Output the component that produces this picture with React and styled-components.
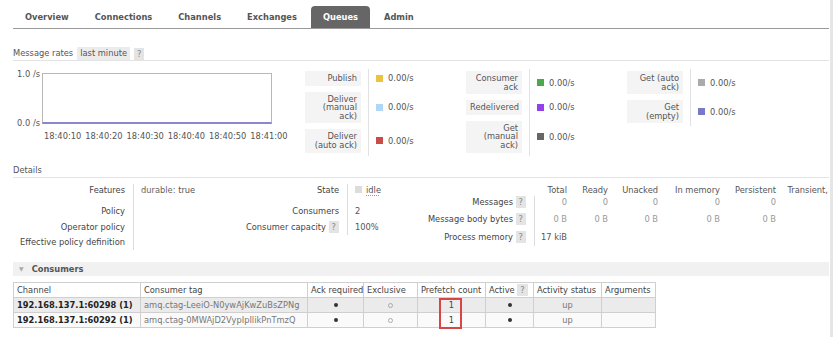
import React from 'react';
import styled, { createGlobalStyle } from 'styled-components';

const GlobalStyle = createGlobalStyle`
  html, body {
    margin: 0;
    padding: 0;
    background: #fff;
  }
  body {
    font-family: "DejaVu Sans", Verdana, sans-serif;
    font-size: 8.3px;
    color: #444;
  }
`;

const tabs = ['Overview', 'Connections', 'Channels', 'Exchanges', 'Queues', 'Admin'];
const times = ['18:40:10', '18:40:20', '18:40:30', '18:40:40', '18:40:50', '18:41:00'];

const legend = [
  [
    { label: 'Publish', color: '#edc240' },
    { label: 'Deliver (manual ack)', color: '#afd8f8' },
    { label: 'Deliver (auto ack)', color: '#cb4b4b' },
  ],
  [
    { label: 'Consumer ack', color: '#4da74d' },
    { label: 'Redelivered', color: '#9440ed' },
    { label: 'Get (manual ack)', color: '#666666' },
  ],
  [
    { label: 'Get (auto ack)', color: '#aaaaaa' },
    { label: 'Get (empty)', color: '#7c79c4' },
  ],
];

const countCols = [
  { name: 'Total', w: 32 },
  { name: 'Ready', w: 40 },
  { name: 'Unacked', w: 49 },
  { name: 'In memory', w: 61 },
  { name: 'Persistent', w: 55 },
  { name: 'Transient,', w: 51 },
];

const consumers = [
  { channel: '192.168.137.1:60298 (1)', tag: 'amq.ctag-LeeiO-N0ywAjKwZuBsZPNg' },
  { channel: '192.168.137.1:60292 (1)', tag: 'amq.ctag-0MWAjD2VypIpIlikPnTmzQ' },
];

const consumerCols = [
  ['Channel', 127],
  ['Consumer tag', 167],
  ['Ack required', 56],
  ['Exclusive', 54],
  ['Prefetch count', 68],
  ['Active', 48],
  ['Activity status', 68],
  ['Arguments', 54],
];

const Help = () => <HelpChip>?</HelpChip>;

const App = () => {
  return (
    <>
      <GlobalStyle />
      <Page>
        <Nav>
          {tabs.map(t => (
            <Tab key={t} $active={t === 'Queues'}>
              {t}
            </Tab>
          ))}
        </Nav>

        <SectionTitle $top={18}>
          Message rates
          <Chip>last minute</Chip>
          <HelpChip>?</HelpChip>
        </SectionTitle>

        <RatesRow>
          <ChartBlock>
            <Plot>
              <YAxis>
                <span>1.0 /s</span>
                <span>0.0 /s</span>
              </YAxis>
              <PlotBox />
            </Plot>
            <TimeAxis>
              {times.map(t => (
                <span key={t}>{t}</span>
              ))}
            </TimeAxis>
          </ChartBlock>

          {legend.map((group, gi) => (
            <LegendGroup key={gi}>
              <LegendSep style={{ gridRow: `1 / span ${group.length}` }} />
              {group.map((item, i) => (
                <React.Fragment key={item.label}>
                  <LegendLabel style={{ gridRow: i + 1 }}>{item.label}</LegendLabel>
                  <LegendValue style={{ gridRow: i + 1 }}>
                    <Swatch $color={item.color} />
                    0.00/s
                  </LegendValue>
                </React.Fragment>
              ))}
            </LegendGroup>
          ))}
        </RatesRow>

        <SectionTitle $top={8}>Details</SectionTitle>

        <DetailsRow>
          <KV>
            <tbody>
              <Tr $h={20} $top>
                <Th $w={112} $pt={1}>Features</Th>
                <Td $w={92} $pt={1}>
                  <Muted>durable:</Muted> true
                </Td>
              </Tr>
              <Tr $h={15}>
                <Th $w={112}>Policy</Th>
                <Td $w={92} />
              </Tr>
              <Tr $h={16}>
                <Th $w={112}>Operator policy</Th>
                <Td $w={92} />
              </Tr>
              <Tr $h={15}>
                <Th $w={112}>Effective policy definition</Th>
                <Td $w={92} />
              </Tr>
            </tbody>
          </KV>

          <KV>
            <tbody>
              <Tr $h={20} $top>
                <Th $w={106} $pt={1}>State</Th>
                <Td $w={65} $pt={1}>
                  <StateBox>
                    <Swatch $color="#dcdcdc" />
                    <Abbr>idle</Abbr>
                  </StateBox>
                </Td>
              </Tr>
              <Tr $h={15}>
                <Th $w={106}>Consumers</Th>
                <Td $w={65}>2</Td>
              </Tr>
              <Tr $h={16}>
                <Th $w={106}>
                  Consumer capacity <Help />
                </Th>
                <Td $w={65}>100%</Td>
              </Tr>
            </tbody>
          </KV>

          <KV>
            <tbody>
              <Tr $h={12}>
                <Th $w={106} />
                {countCols.map((c, i) => (
                  <NumHead key={c.name} $w={c.w}>
                    {c.name}
                  </NumHead>
                ))}
              </Tr>
              <Tr $h={13}>
                <Th $w={106}>
                  Messages <Help />
                </Th>
                {countCols.map((c, i) => (
                  <Num key={c.name} $w={c.w} $first={i === 0}>
                    {i < 5 ? '0' : ''}
                  </Num>
                ))}
              </Tr>
              <Tr $h={20}>
                <Th $w={106}>
                  Message body bytes <Help />
                </Th>
                {countCols.map((c, i) => (
                  <Num key={c.name} $w={c.w} $first={i === 0}>
                    {i < 5 ? '0 B' : ''}
                  </Num>
                ))}
              </Tr>
              <Tr $h={17}>
                <Th $w={106}>
                  Process memory <Help />
                </Th>
                {countCols.map((c, i) => (
                  <Num key={c.name} $w={c.w} $first={i === 0} $dark={i === 0}>
                    {i === 0 ? '17 kiB' : ''}
                  </Num>
                ))}
              </Tr>
            </tbody>
          </KV>
        </DetailsRow>

        <CollapseBar>
          <Caret>▼</Caret>
          Consumers
        </CollapseBar>

        <ConsumerTable>
          <colgroup>
            {consumerCols.map(([name, w]) => (
              <col key={name} style={{ width: w }} />
            ))}
          </colgroup>
          <thead>
            <tr>
              {consumerCols.map(([name]) => (
                <CHead key={name}>
                  {name}
                  {name === 'Active' && (
                    <>
                      {' '}
                      <Help />
                    </>
                  )}
                </CHead>
              ))}
            </tr>
          </thead>
          <tbody>
            {consumers.map((c, i) => (
              <CRow key={c.channel} $alt={i === 0}>
                <CCell $bold>{c.channel}</CCell>
                <CCell $muted>{c.tag}</CCell>
                <CCell $center>
                  <Dot />
                </CCell>
                <CCell $center>
                  <Ring />
                </CCell>
                <CCell $center $anchor={i === 0}>
                  1{i === 0 && <Highlight />}
                </CCell>
                <CCell $center>
                  <Dot />
                </CCell>
                <CCell $center $muted>
                  up
                </CCell>
                <CCell />
              </CRow>
            ))}
          </tbody>
        </ConsumerTable>
      </Page>
    </>
  );
};

export default App;

const Page = styled.div`
  width: 816px;
  height: 337px;
  padding: 0 1px 0 13px;
  border-right: 3px solid #e6e6e6;
  overflow: hidden;
`;

const Nav = styled.nav`
  display: flex;
  gap: 2px;
  height: 22px;
  padding-top: 6px;
  border-bottom: 1px solid #9a9a9a;
`;

const Tab = styled.div`
  padding: 0 12px;
  line-height: 22px;
  font-weight: bold;
  color: ${p => (p.$active ? '#fff' : '#555')};
  background: ${p => (p.$active ? '#666' : 'transparent')};
  border-radius: 4px 4px 0 0;
`;

const SectionTitle = styled.div`
  display: flex;
  align-items: center;
  gap: 4px;
  margin-top: ${p => p.$top}px;
  height: 13px;
  line-height: 13px;
  color: #555;
  border-bottom: 1px solid #e3e3e3;
`;

const Chip = styled.span`
  padding: 0 3px;
  background: #ececec;
  color: #555;
`;

const HelpChip = styled.span`
  display: inline-block;
  padding: 0 3px;
  line-height: 12px;
  background: #e4e4e4;
  color: #888;
`;

const RatesRow = styled.div`
  display: flex;
  margin-top: 8px;
`;

const ChartBlock = styled.div`
  width: 292px;
  flex-shrink: 0;
  padding-top: 4px;
`;

const Plot = styled.div`
  display: flex;
`;

const YAxis = styled.div`
  width: 27px;
  margin: -4px 2px -4px 0;
  display: flex;
  flex-direction: column;
  justify-content: space-between;
  align-items: flex-end;
  line-height: 10px;
  color: #555;
`;

const PlotBox = styled.div`
  width: 228px;
  height: 48px;
  border: 1px solid #b8b8b8;
  border-bottom: 2px solid #8b87cf;
`;

const TimeAxis = styled.div`
  display: flex;
  gap: 4px;
  margin-top: 7px;
  padding-left: 31px;
  line-height: 10px;
  color: #555;
  white-space: nowrap;
`;

const LegendGroup = styled.div`
  width: 161px;
  flex-shrink: 0;
  display: grid;
  grid-template-columns: 56px 1px auto;
  column-gap: 7px;
  row-gap: 6px;
  align-items: center;
  align-content: start;
  padding: 2px 0 3px;
`;

const LegendSep = styled.div`
  grid-column: 2;
  align-self: stretch;
  margin: -2px 0 -3px;
  background: #e2e2e2;
`;

const LegendLabel = styled.div`
  grid-column: 1;
  width: 48px;
  padding: 3px 4px;
  line-height: 8.6px;
  text-align: right;
  background: #f4f4f4;
  color: #555;
`;

const LegendValue = styled.div`
  grid-column: 3;
  display: flex;
  align-items: center;
  gap: 5px;
  color: #555;
`;

const Swatch = styled.span`
  display: inline-block;
  width: 7px;
  height: 7px;
  background: ${p => p.$color};
`;

const DetailsRow = styled.div`
  display: flex;
  align-items: flex-start;
  margin-top: 6px;
`;

const KV = styled.table`
  flex-shrink: 0;
  border-collapse: collapse;
  border-spacing: 0;
  font-size: inherit;
  color: #444;
`;

const Tr = styled.tr`
  height: ${p => p.$h}px;
  vertical-align: ${p => (p.$top ? 'top' : 'middle')};
`;

const Th = styled.th`
  width: ${p => p.$w}px;
  padding: ${p => p.$pt || 0}px 8px 0 0;
  font-weight: normal;
  text-align: right;
  white-space: nowrap;
  line-height: 10px;
`;

const Td = styled.td`
  width: ${p => p.$w}px;
  padding: ${p => p.$pt || 0}px 0 0 7px;
  border-left: 1px solid #dcdcdc;
  white-space: nowrap;
  line-height: 10px;
  color: #555;
`;

const Muted = styled.span`
  color: #666;
`;

const StateBox = styled.span`
  display: inline-flex;
  align-items: center;
  gap: 4px;
`;

const Abbr = styled.span`
  text-decoration: underline dotted #999;
  text-underline-offset: 2px;
`;

const NumHead = styled.th`
  width: ${p => p.$w}px;
  padding: 0;
  border-left: 1px solid transparent;
  font-weight: normal;
  text-align: right;
  white-space: nowrap;
  color: #555;
`;

const Num = styled.td`
  width: ${p => p.$w}px;
  padding: 0;
  border-left: 1px solid ${p => (p.$first ? '#dcdcdc' : 'transparent')};
  text-align: right;
  white-space: nowrap;
  color: ${p => (p.$dark ? '#555' : '#999')};
`;

const CollapseBar = styled.div`
  display: flex;
  align-items: center;
  margin-top: 12px;
  height: 14px;
  padding-left: 6px;
  background: #f1f1f1;
  font-weight: bold;
  color: #555;
`;

const Caret = styled.span`
  font-size: 6px;
  color: #aaa;
  margin-right: 8px;
`;

const ConsumerTable = styled.table`
  margin-top: 6px;
  width: 642px;
  table-layout: fixed;
  border-collapse: collapse;
  font-size: inherit;
  color: #444;
`;

const CHead = styled.th`
  height: 14px;
  padding: 0 3px;
  border: 1px solid #cfcfcf;
  font-weight: normal;
  text-align: left;
  white-space: nowrap;
  background: #fff;
`;

const CRow = styled.tr`
  background: ${p => (p.$alt ? '#ebebeb' : '#fafafa')};
`;

const CCell = styled.td`
  position: ${p => (p.$anchor ? 'relative' : 'static')};
  height: 14px;
  padding: 0 3px;
  border: 1px solid #cfcfcf;
  white-space: nowrap;
  overflow: ${p => (p.$anchor ? 'visible' : 'hidden')};
  text-align: ${p => (p.$center ? 'center' : 'left')};
  font-weight: ${p => (p.$bold ? 'bold' : 'normal')};
  color: ${p => (p.$bold ? '#222' : p.$muted ? '#777' : '#444')};
`;

const Dot = styled.span`
  display: inline-block;
  width: 4px;
  height: 4px;
  border-radius: 50%;
  background: #333;
  vertical-align: middle;
`;

const Ring = styled.span`
  display: inline-block;
  width: 3px;
  height: 3px;
  border-radius: 50%;
  border: 1px solid #aaa;
  vertical-align: middle;
`;

const Highlight = styled.span`
  position: absolute;
  left: 21px;
  top: 0;
  width: 23px;
  height: 31px;
  box-sizing: border-box;
  border: 2px solid #d94545;
  pointer-events: none;
`;
